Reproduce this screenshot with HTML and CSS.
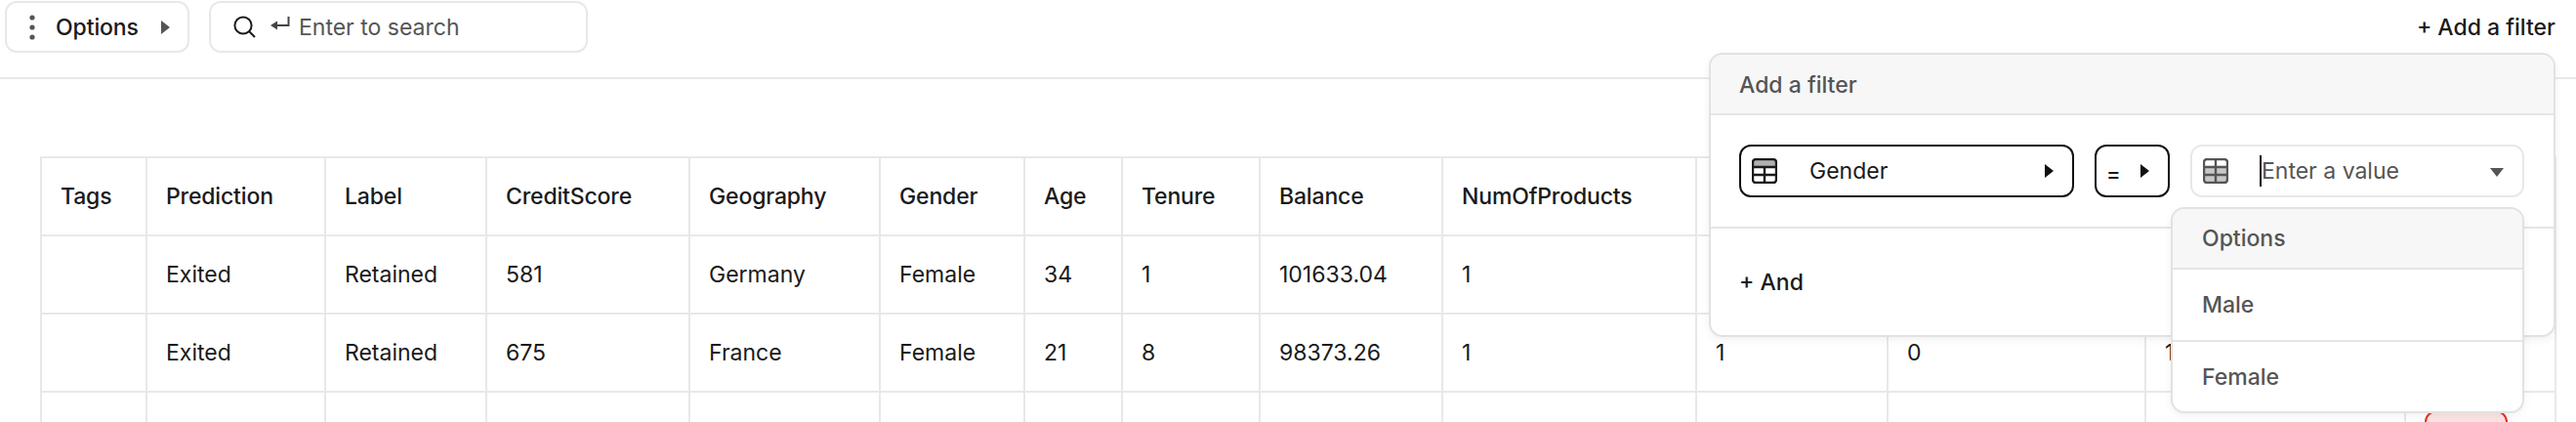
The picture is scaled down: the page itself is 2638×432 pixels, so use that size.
FILE: index.html
```html
<!DOCTYPE html>
<html lang="en">
<head>
<meta charset="utf-8">
<title>Data table</title>
<link rel="stylesheet" href="styles.css">
</head>
<body>
<header class="toolbar">
  <button class="btn options">
    <svg class="dots" width="6" height="26" viewBox="0 0 6 26"><circle cx="3" cy="3" r="2.6"/><circle cx="3" cy="13" r="2.6"/><circle cx="3" cy="23" r="2.6"/></svg>
    <span>Options</span>
    <svg class="tri" width="9" height="14" viewBox="0 0 9 14"><path d="M0 0L9 7L0 14Z"/></svg>
  </button>
  <div class="btn search">
    <svg class="lens" width="23" height="23" viewBox="0 0 23 23"><circle cx="10" cy="10" r="8.6"/><path d="M16 16L22 22"/></svg>
    <svg class="enter" width="20" height="16" viewBox="0 0 20 16"><path d="M18.5 0V9H2"/><path class="head" d="M0 9L7 4.5V13.5Z"/></svg>
    <span>Enter to search</span>
  </div>
  <a class="add">+ Add a filter</a>
</header>

<table class="grid">
  <colgroup>
    <col class="w1"><col class="w2"><col class="w3"><col class="w4"><col class="w5"><col class="w6"><col class="w7"><col class="w8"><col class="w9"><col class="w10"><col class="w11"><col class="w12"><col class="w13"><col class="w14">
  </colgroup>
  <thead>
    <tr><th>Tags</th><th>Prediction</th><th>Label</th><th>CreditScore</th><th>Geography</th><th>Gender</th><th>Age</th><th>Tenure</th><th>Balance</th><th>NumOfProducts</th><th></th><th></th><th></th><th></th></tr>
  </thead>
  <tbody>
    <tr><td></td><td>Exited</td><td>Retained</td><td>581</td><td>Germany</td><td>Female</td><td>34</td><td>1</td><td>101633.04</td><td>1</td><td></td><td></td><td></td><td></td></tr>
    <tr><td></td><td>Exited</td><td>Retained</td><td>675</td><td>France</td><td>Female</td><td>21</td><td>8</td><td>98373.26</td><td>1</td><td>1</td><td>0</td><td>1</td><td></td></tr>
    <tr class="last"><td></td><td></td><td></td><td></td><td></td><td></td><td></td><td></td><td></td><td></td><td></td><td></td><td></td><td><span class="badge"></span></td></tr>
  </tbody>
</table>

<section class="popup">
  <div class="popup-head">Add a filter</div>
  <div class="popup-row">
    <div class="field field-col">
      <svg class="tbl" width="26" height="26" viewBox="0 0 26 26"><path class="fill" d="M1 5a4 4 0 0 1 4-4h16a4 4 0 0 1 4 4v4H1Z"/><rect x="1" y="1" width="24" height="24" rx="3"/><path d="M1 9H25M1 17H25M13 9V25"/></svg>
      <span>Gender</span>
      <svg class="tri dark" width="9" height="14" viewBox="0 0 9 14"><path d="M0 0L9 7L0 14Z"/></svg>
    </div>
    <div class="field field-op">
      <span class="eq">=</span>
      <svg class="tri dark" width="9" height="14" viewBox="0 0 9 14"><path d="M0 0L9 7L0 14Z"/></svg>
    </div>
    <div class="field field-val">
      <svg class="tbl muted" width="26" height="26" viewBox="0 0 26 26"><path class="fill" d="M1 9H25V21a4 4 0 0 1-4 4H5a4 4 0 0 1-4-4Z"/><rect x="1" y="1" width="24" height="24" rx="3"/><path d="M1 9H25M1 17H25M13 1V25"/></svg>
      <span class="placeholder">Enter a value</span>
      <svg class="down" width="14" height="9" viewBox="0 0 14 9"><path d="M0 0H14L7 9Z"/></svg>
    </div>
  </div>
  <div class="popup-foot">+ And</div>
  <div class="menu">
    <div class="menu-head">Options</div>
    <div class="menu-item">Male</div>
    <div class="menu-item">Female</div>
  </div>
</section>
</body>
</html>
```
FILE: styles.css
```css
* { box-sizing: border-box; }
html, body { margin: 0; height: 432px; overflow: hidden; background: #fff; }
body { position: relative; font-family: Inter, "Liberation Sans", sans-serif; font-size: 23px; color: #1a1a1a; }

.toolbar { display: flex; align-items: flex-start; gap: 20px; height: 81px; padding: 1px 21px 0 5px; border-bottom: 2px solid #e8e8e8; }
.btn { display: flex; align-items: center; height: 53px; border: 2px solid #e8e8e8; border-radius: 12px; background: #fff; font: inherit; color: inherit; padding: 0; }
.options { width: 189px; padding-left: 23px; font-weight: 500; }
.options span { margin-left: 21px; letter-spacing: -0.1px; }
.options .tri { margin-left: 23px; }
.dots { fill: #555; }
.tri { fill: #555; flex: none; }
.tri.dark { fill: #111; margin-left: auto; }
.search { width: 388px; padding-left: 23px; color: #555; }
.lens { fill: none; stroke: #1a1a1a; stroke-width: 2; }
.enter { margin-left: 15px; margin-top: -5px; margin-right: 9px; fill: none; stroke: #444; stroke-width: 2; }
.enter .head { fill: #444; stroke: none; }
.add { margin-left: auto; margin-top: 9px; font-weight: 500; line-height: 36px; }

.grid { margin: 79px 0 0 41px; width: 2577px; table-layout: fixed; border-collapse: separate; border-spacing: 0; border-top: 2px solid #e8e8e8; border-left: 2px solid #e8e8e8; }
.w1 { width: 108px; } .w2 { width: 183px; } .w3 { width: 165px; } .w4 { width: 208px; }
.w5 { width: 195px; } .w6 { width: 148px; } .w7 { width: 100px; } .w8 { width: 141px; }
.w9 { width: 187px; } .w10 { width: 260px; } .w11 { width: 196px; } .w12 { width: 264px; }
.w13 { width: 266px; } .w14 { width: 154px; }
.grid th, .grid td { height: 80px; padding: 0 0 0 19px; border-right: 2px solid #e8e8e8; border-bottom: 2px solid #e8e8e8; text-align: left; font-weight: 400; white-space: nowrap; overflow: hidden; }
.grid th { font-weight: 500; letter-spacing: -0.15px; }
.last td { vertical-align: top; }
.badge { display: block; width: 85px; height: 44px; margin-top: 18px; background: #fbe5e3; border: 2px solid #e8342a; border-radius: 12px; }

.popup { position: absolute; left: 1750px; top: 54px; width: 867px; height: 291px; background: #fff; border: 2px solid #e2e2e2; border-radius: 14px; box-shadow: 0 3px 10px rgba(0,0,0,.06); }
.popup-head { height: 62px; padding-left: 29px; line-height: 62px; background: #f7f7f7; border-bottom: 2px solid #e5e5e5; border-radius: 12px 12px 0 0; color: #555; font-weight: 500; }
.popup-row { display: flex; gap: 21px; height: 116px; padding: 30px 0 0 29px; border-bottom: 2px solid #e5e5e5; }
.popup-foot { padding-left: 29px; line-height: 110px; font-weight: 500; }
.field { display: flex; align-items: center; height: 54px; border: 2px solid #111; border-radius: 12px; padding: 0 19px 0 11px; }
.field-col { width: 343px; }
.field-op { width: 77px; }
.field-val { width: 342px; border-color: #e8e8e8; }
.field-col span { margin-left: 33px; }
.eq { font-size: 22px; font-weight: 500; margin: 5px 0 0 -1px; }
.tbl { flex: none; fill: none; stroke: #1a1a1a; stroke-width: 2.4; }
.tbl .fill { fill: #b0b0b0; stroke: none; }
.tbl.muted { stroke: #555; }
.tbl.muted .fill { fill: #c8c8c8; }
.placeholder { margin-left: 32px; border-left: 2px solid #111; height: 32px; line-height: 32px; color: #555; }
.down { margin-left: auto; fill: #555; margin-top: 3px; }

.menu { position: absolute; left: 471px; top: 156px; width: 362px; height: 211px; background: #fff; border: 2px solid #e2e2e2; border-radius: 14px; box-shadow: 0 3px 10px rgba(0,0,0,.06); color: #555; font-weight: 500; }
.menu-head { height: 62px; padding-left: 30px; line-height: 60px; background: #f7f7f7; border-bottom: 2px solid #e5e5e5; border-radius: 12px 12px 0 0; }
.menu-item { height: 74px; padding-left: 30px; line-height: 72px; border-bottom: 2px solid #e5e5e5; }
.menu-item:last-child { border-bottom: 0; }
```
